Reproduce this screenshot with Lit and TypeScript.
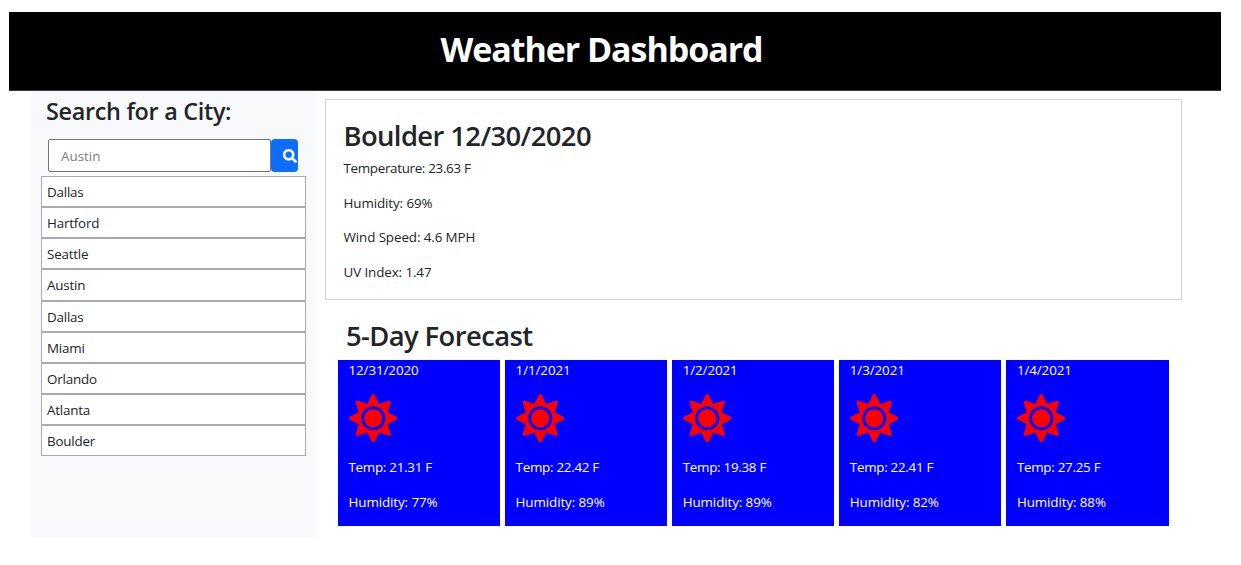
import { LitElement, html, css } from "lit";
import { customElement } from "lit/decorators.js";

const cities = ["Dallas", "Hartford", "Seattle", "Austin", "Dallas", "Miami", "Orlando", "Atlanta", "Boulder"];

const days = [
  { date: "12/31/2020", temp: "21.31", humidity: 77 },
  { date: "1/1/2021", temp: "22.42", humidity: 89 },
  { date: "1/2/2021", temp: "19.38", humidity: 89 },
  { date: "1/3/2021", temp: "22.41", humidity: 82 },
  { date: "1/4/2021", temp: "27.25", humidity: 88 },
];

const sun = html`<svg class="sun" viewBox="0 0 512 512" aria-hidden="true"><path fill="currentColor" d="M256 160c-52.9 0-96 43.1-96 96s43.1 96 96 96 96-43.1 96-96-43.1-96-96-96zm246.4 80.5l-94.7-47.3 33.5-100.4c4.5-13.6-8.4-26.5-21.9-21.9l-100.4 33.5-47.4-94.8c-6.4-12.8-24.6-12.8-31 0l-47.3 94.7L92.7 70.8c-13.6-4.5-26.5 8.4-21.9 21.9l33.5 100.4-94.7 47.4c-12.8 6.4-12.8 24.6 0 31l94.7 47.3-33.5 100.5c-4.5 13.6 8.4 26.5 21.9 21.9l100.4-33.5 47.3 94.7c6.4 12.8 24.6 12.8 31 0l47.3-94.7 100.4 33.5c13.6 4.5 26.5-8.4 21.9-21.9l-33.5-100.4 94.7-47.3c13-6.5 13-24.7.2-31.1zm-155.9 106c-49.9 49.9-131.1 49.9-181 0-49.9-49.9-49.9-131.1 0-181 49.9-49.9 131.1-49.9 181 0 49.9 49.9 49.9 131.1 0 181z"/></svg>`;

const magnifier = html`<svg class="magnifier" viewBox="0 0 512 512" aria-hidden="true"><path fill="currentColor" stroke="currentColor" stroke-width="14" d="M505 442.7L405.3 343c-4.5-4.5-10.6-7-17-7H372c27.6-35.3 44-79.7 44-128C416 93.1 322.9 0 208 0S0 93.1 0 208s93.1 208 208 208c48.3 0 92.7-16.4 128-44v16.3c0 6.4 2.5 12.5 7 17l99.7 99.7c9.4 9.4 24.6 9.4 33.9 0l28.3-28.3c9.4-9.4 9.4-24.6.1-34zM208 336c-70.7 0-128-57.2-128-128 0-70.7 57.2-128 128-128 70.7 0 128 57.2 128 128 0 70.7-57.2 128-128 128z"/></svg>`;

@customElement("app-root")
export class AppRoot extends LitElement {
  static styles = css`
    :host {
      display: block;
      box-sizing: border-box;
      height: 565px;
      padding: 12px 20px 0 9px;
      background: #fff;
      color: #212529;
      font: 13.4px/21px "Open Sans", "Noto Sans", sans-serif;
      letter-spacing: -0.1px;
      overflow: hidden;
    }
    * { box-sizing: border-box; }
    h1, h2, p, ul { margin: 0; padding: 0; }
    .header {
      height: 79px;
      padding: 15px 27px 0 0;
      background: #000;
      border-bottom: 1px solid #3a3a3a;
      color: #fff;
      text-align: center;
    }
    .header h1 { font-size: 34px; font-weight: 700; line-height: 44px; letter-spacing: -1.06px; }
    .body { display: flex; gap: 9px; padding: 0 39.5px 0 22px; }
    .sidebar { width: 285px; height: 446px; padding: 0 10px; background: #f8f9fa; }
    h2 { font-weight: 560; white-space: nowrap; }
    .sidebar h2 { padding: 4px 0 0 5px; font-size: 23.4px; line-height: 32px; letter-spacing: -0.3px; }
    .search { display: flex; height: 33px; margin: 12px 8px 4px 7px; }
    .field {
      width: 224px;
      padding: 1px 11px 0 12px;
      border: 1px solid #767676;
      border-radius: 2px;
      background: #fff;
      color: #212529;
      font: inherit;
    }
    .field::placeholder { color: #7c8085; opacity: 1; }
    .button {
      display: flex;
      align-items: center;
      justify-content: flex-end;
      width: 27px;
      padding: 0 1px 0 0;
      border: 0;
      border-radius: 4px;
      background: #0d6efd;
      color: #fff;
    }
    .magnifier { width: 14px; height: 14px; }
    .cities { width: 265px; list-style: none; letter-spacing: -0.2px; }
    .cities li {
      height: 31.15px;
      padding: 5px 5px 0;
      border: 1px solid #a9abad;
      background: #fff;
    }
    .main { flex: 1; padding-top: 8px; }
    .current {
      height: 201px;
      padding: 19px 18px 0 17.5px;
      border: 1px solid #d3d4d5;
    }
    .current h2, .forecast h2 { font-size: 27.4px; line-height: 34px; letter-spacing: -0.6px; }
    .current p { margin: 5px 0 13.7px; }
    .current p + p { margin: 0 0 13.7px; }
    .current .temperature { letter-spacing: -0.32px; }
    .forecast { padding: 18.6px 13px 0; }
    .forecast h2 { padding-left: 8px; }
    .days { display: grid; grid-template-columns: repeat(5, 1fr); gap: 5px; padding-top: 7px; }
    .day { height: 166px; padding: 0 10.5px; background: #00f; color: #fff; }
    .sun { display: block; width: 48.5px; height: 48.5px; margin: 13.3px 0 14.2px; color: #f00; }
    .day p + p { margin-top: 14px; }
    .day .temperature { letter-spacing: -0.28px; }
  `;

  render() {
    return html`
      <header class="header"><h1>Weather Dashboard</h1></header>
      <div class="body">
        <aside class="sidebar">
          <h2>Search for a City:</h2>
          <div class="search">
            <input class="field" placeholder="Austin" aria-label="City" />
            <button class="button" aria-label="Search">${magnifier}</button>
          </div>
          <ul class="cities">${cities.map((c) => html`<li>${c}</li>`)}</ul>
        </aside>
        <main class="main">
          <section class="current">
            <h2>Boulder 12/30/2020</h2>
            <p class="temperature">Temperature: 23.63 F</p>
            <p>Humidity: 69%</p>
            <p>Wind Speed: 4.6 MPH</p>
            <p>UV Index: 1.47</p>
          </section>
          <section class="forecast">
            <h2>5-Day Forecast</h2>
            <div class="days">
              ${days.map((d) => html`
                <article class="day">
                  <p>${d.date}</p>
                  ${sun}
                  <p class="temperature">Temp: ${d.temp} F</p>
                  <p>Humidity: ${d.humidity}%</p>
                </article>`)}
            </div>
          </section>
        </main>
      </div>
    `;
  }
}
